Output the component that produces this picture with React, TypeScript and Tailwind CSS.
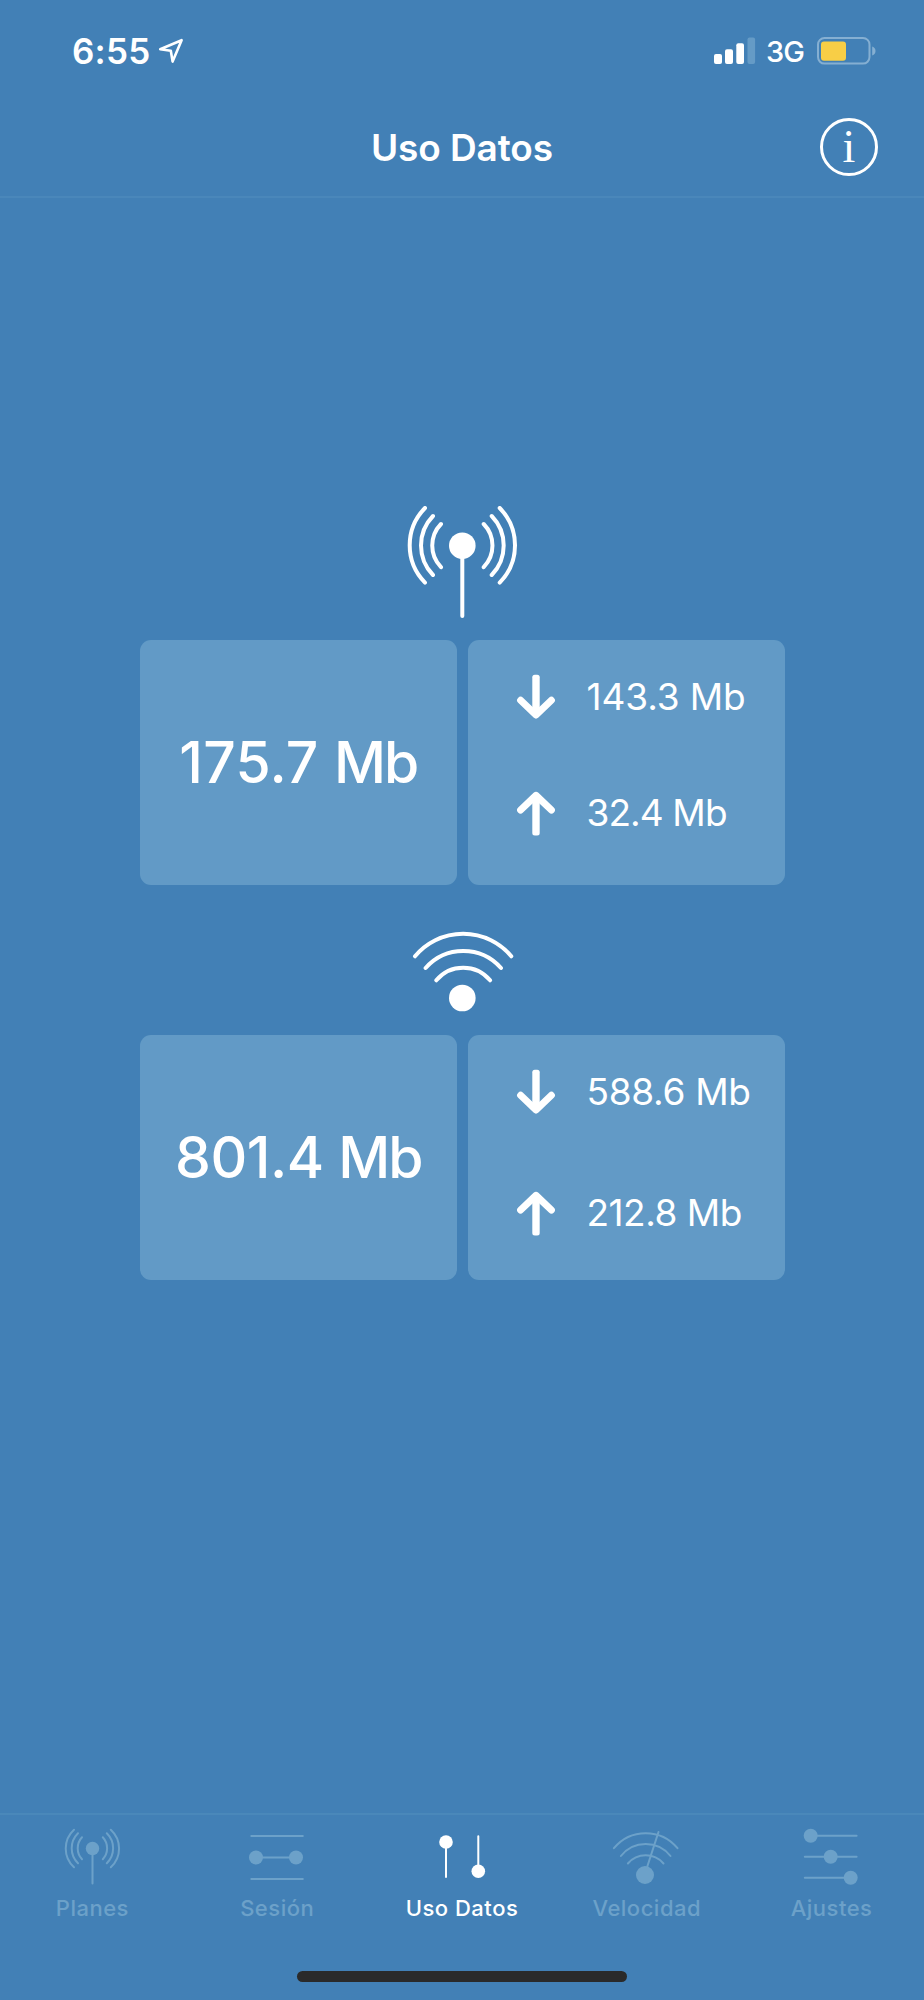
import type { ReactNode } from "react";

function StatusBar() {
  return (
    <div className="flex h-[100px] items-center justify-between pl-[72px] pr-[47px] pt-[2px]">
      <div className="flex items-center gap-[8px]">
        <span className="text-[35px] leading-[40px] font-semibold tracking-[0.2px]">6:55</span>
        <svg className="h-[28px] w-[28px]" viewBox="0 0 28 28" fill="none" stroke="white" strokeWidth="2.6" strokeLinejoin="round">
          <path d="M2.2 12.2 L23.6 3.2 L14.6 24.6 L12.8 13.8 Z" />
        </svg>
      </div>
      <div className="flex items-center">
        <svg className="h-[28px] w-[42px]" viewBox="0 0 42 28" fill="white">
          <rect x="0" y="17" width="8" height="10" rx="2" />
          <rect x="11" y="12.3" width="8" height="14.7" rx="2" />
          <rect x="22.3" y="6.3" width="7.7" height="20.7" rx="2" />
          <rect x="33.5" y="0.5" width="7.6" height="26.5" rx="2" fill="#659bc6" />
        </svg>
        <span className="ml-[10px] w-[51px] pt-[1px] text-[29px] leading-[36px] font-medium tracking-[-1px]">3G</span>
        <svg className="h-[28px] w-[60px]" viewBox="0 0 60 28" fill="none">
          <rect x="1" y="1" width="51.5" height="25.6" rx="6.5" stroke="#85afd2" strokeWidth="2" />
          <rect x="4" y="4.5" width="25" height="19.2" rx="3" fill="#f8ce46" />
          <path d="M55.2 9.5 C59.6 11 59.6 17 55.2 18.5 Z" fill="#85afd2" />
        </svg>
      </div>
    </div>
  );
}

function NavBar() {
  return (
    <div className="grid h-[98px] grid-cols-[1fr_auto_1fr] border-b-2 border-[#4a87ba] pr-[45px]">
      <span />
      <h1 className="pl-[45px] pt-[25px] text-[37px] leading-[46px] font-semibold tracking-[-0.1px]">Uso Datos</h1>
      <button className="mr-[1px] mt-[18px] flex h-[58px] w-[58px] items-center justify-center justify-self-end rounded-full border-[3px] border-white font-['Liberation_Serif',serif] text-[46px] leading-[50px]">
        i
      </button>
    </div>
  );
}

function AntennaIcon() {
  return (
    <svg className="h-[114px] w-[112px]" viewBox="0 0 112 114" fill="none" stroke="white" strokeWidth="4" strokeLinecap="round">
      <path d="M56.3 42V110" />
      <circle cx="56.3" cy="39.7" r="13.3" fill="white" stroke="none" />
      <path d="M19 2 A53.1 53.1 0 0 0 19 76.6 M27 10 A42.3 42.3 0 0 0 27 69 M35 18 A31 31 0 0 0 35 61.2" />
      <path d="M93.7 2 A53.1 53.1 0 0 1 93.7 76.6 M85.7 10 A42.3 42.3 0 0 1 85.7 69 M77.7 18 A31 31 0 0 1 77.7 61.2" />
    </svg>
  );
}

function WifiIcon() {
  return (
    <svg className="h-[84px] w-[104px]" viewBox="0 0 104 84" fill="none" stroke="white" strokeWidth="4" strokeLinecap="round">
      <path d="M5 26.3 A62.7 62.7 0 0 1 101.3 26.3 M15.6 38 A50.3 50.3 0 0 1 91 38 M26.3 50.3 A35 35 0 0 1 80.1 50.3" />
      <circle cx="52.3" cy="68" r="13.3" fill="white" stroke="none" />
    </svg>
  );
}

function ArrowDown() {
  return (
    <svg className="h-[46px] w-[40px]" viewBox="0 0 40 46" fill="none">
      <rect x="16.3" y="0.7" width="7.4" height="40" rx="2.5" fill="white" />
      <path d="M4.6 26.3 L20 41 L35.4 26.3" stroke="white" strokeWidth="7" strokeLinecap="round" strokeLinejoin="round" />
    </svg>
  );
}

function ArrowUp() {
  return (
    <svg className="h-[46px] w-[40px]" viewBox="0 0 40 46" fill="none">
      <rect x="16.3" y="5.5" width="7.4" height="40" rx="2.5" fill="white" />
      <path d="M4.6 20 L20 5.4 L35.4 20" stroke="white" strokeWidth="7" strokeLinecap="round" strokeLinejoin="round" />
    </svg>
  );
}

interface Reading {
  value: string;
  className: string;
}

function UsageCards({ total, down, up, upClass }: { total: Reading; down: Reading; up: Reading; upClass: string }) {
  return (
    <div className="grid h-[245.3px] w-[644.7px] grid-cols-2 gap-[11.3px]">
      <div className="flex items-center justify-center rounded-[11px] bg-[#629ac6] text-[57px] leading-[60px] font-medium">
        <p className={total.className}>
          {total.value} <span className="tracking-[-2px]">Mb</span>
        </p>
      </div>
      <div className="flex flex-col rounded-[11px] bg-[#629ac6] pl-[48px] pt-[34px] text-[37px] leading-[46px] font-normal">
        <div className="flex h-[46px] gap-[30.5px]">
          <ArrowDown />
          <span className={down.className}>{down.value}</span>
        </div>
        <div className={upClass}>
          <ArrowUp />
          <span className={up.className}>{up.value}</span>
        </div>
      </div>
    </div>
  );
}

function TabIcon({ children }: { children: ReactNode }) {
  return (
    <svg className="h-[60px] w-[72px]" viewBox="0 0 72 60" fill="none" stroke="currentColor" strokeWidth="2" strokeLinecap="round">
      {children}
    </svg>
  );
}

function Dot({ x, y, r = 7 }: { x: number; y: number; r?: number }) {
  return <circle cx={x} cy={y} r={r} fill="currentColor" stroke="none" />;
}

const tabs: { label: string; active?: boolean; icon: ReactNode }[] = [
  {
    label: "Planes",
    icon: (
      <>
        <path d="M36.5 24V57.5" />
        <Dot x={36.5} y={22.5} r={6.7} />
        <path d="M18 3.7 A25.5 25.5 0 0 0 18 41.3 M22 7.3 A21 21 0 0 0 22 37.3 M26 11.3 A16.2 16.2 0 0 0 26 33.3" />
        <path d="M54.8 3.7 A25.5 25.5 0 0 1 54.8 41.3 M50.8 7.3 A21 21 0 0 1 50.8 37.3 M46.8 11.3 A16.2 16.2 0 0 1 46.8 33.3" />
      </>
    ),
  },
  {
    label: "Sesión",
    icon: (
      <>
        <path d="M10.3 10H61.8 M10.3 53H61.8 M14.8 31.5H54.8" />
        <Dot x={15} y={31.5} />
        <Dot x={55} y={31.5} />
      </>
    ),
  },
  {
    label: "Uso Datos",
    active: true,
    icon: (
      <>
        <path d="M20 16V51 M52.3 10.3V45" />
        <Dot x={20} y={16} r={6.8} />
        <Dot x={52.3} y={45.3} r={6.8} />
      </>
    ),
  },
  {
    label: "Velocidad",
    icon: (
      <>
        <path d="M2.9 22.2 A41.2 41.2 0 0 1 66.5 22.2 M9.9 30 A31.6 31.6 0 0 1 59.5 30 M16.9 37.5 A23.4 23.4 0 0 1 52.5 37.5 M34.2 47 L47.5 6" />
        <Dot x={34} y={49} r={9} />
      </>
    ),
  },
  {
    label: "Ajustes",
    icon: (
      <>
        <path d="M14.7 9.7H60.6 M8.8 30.7H60.6 M8.8 51.7H54.7" />
        <Dot x={14.7} y={9.7} />
        <Dot x={34.7} y={30.7} />
        <Dot x={54.7} y={51.7} />
      </>
    ),
  },
];

function TabBar() {
  return (
    <nav className="h-[187px] border-t-2 border-[#4a88ba]">
      <div className="grid h-[156px] grid-cols-5 pt-[11px]">
        {tabs.map((tab) => (
          <div
            key={tab.label}
            className={tab.active ? "flex flex-col items-center text-white" : "flex flex-col items-center text-[#6ca1c9]"}
          >
            <TabIcon>{tab.icon}</TabIcon>
            <span className="mt-[7px] text-[22px] leading-[30px] font-medium tracking-[0.5px]">{tab.label}</span>
          </div>
        ))}
      </div>
      <div className="mx-auto h-[11px] w-[330px] rounded-full bg-[#2a2a2a]" />
    </nav>
  );
}

export default function App() {
  return (
    <div className="flex h-[2000px] w-[924px] flex-col overflow-hidden bg-[#4280b6] font-['Inter',sans-serif] text-white">
      <StatusBar />
      <NavBar />
      <main className="flex flex-1 flex-col pl-[140px] pt-[308px]">
        <div className="flex h-[134px] w-[644.7px] justify-center">
          <AntennaIcon />
        </div>
        <UsageCards
          total={{ value: "175.7", className: "tracking-[0.2px]" }}
          down={{ value: "143.3 Mb", className: "tracking-[-0.1px]" }}
          up={{ value: "32.4 Mb", className: "tracking-[-0.9px]" }}
          upClass="mt-[70px] flex h-[46px] gap-[30.5px]"
        />
        <div className="flex h-[149.7px] w-[644.7px] justify-center pt-[44.7px]">
          <WifiIcon />
        </div>
        <UsageCards
          total={{ value: "801.4", className: "tracking-[-0.5px]" }}
          down={{ value: "588.6 Mb", className: "tracking-[-0.3px]" }}
          up={{ value: "212.8 Mb", className: "tracking-[-0.5px]" }}
          upClass="mt-[75px] flex h-[46px] gap-[30.5px]"
        />
      </main>
      <TabBar />
    </div>
  );
}
